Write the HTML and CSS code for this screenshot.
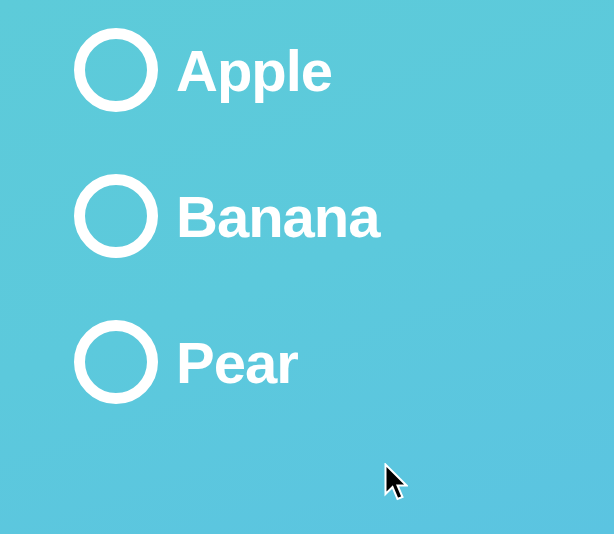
FILE: index.html
```html
<!DOCTYPE html>
<html>
<head>
<meta charset="utf-8">
<link rel="stylesheet" href="styles.css">
</head>
<body>
<div class="page">
  <ul class="options">
    <li class="option"><span class="radio"></span><span class="label">Apple</span></li>
    <li class="option"><span class="radio"></span><span class="label">Banana</span></li>
    <li class="option"><span class="radio"></span><span class="label">Pear</span></li>
  </ul>
  <svg class="cursor" width="24" height="40" viewBox="0 0 24 40" xmlns="http://www.w3.org/2000/svg">
    <path d="M1.5 1.5 L1.5 31 L8.5 24 L13.5 36 L18.5 34 L13.5 22.5 L22.5 22.5 Z" fill="#000" stroke="#fff" stroke-width="2" stroke-linejoin="miter"/>
  </svg>
</div>
</body>
</html>
```

FILE: styles.css
```css
html, body {
  margin: 0;
  padding: 0;
  height: 100%;
}
body {
  background: linear-gradient(160deg, #5dcbd9 0%, #5cc9dc 50%, #5bc4e1 100%);
  font-family: "Liberation Sans", Arial, Helvetica, sans-serif;
  overflow: hidden;
}
.page {
  position: relative;
  width: 614px;
  height: 534px;
}
.options {
  list-style: none;
  margin: 0;
  padding: 28px 0 0 74px;
  display: flex;
  flex-direction: column;
  gap: 62px;
}
.option {
  display: flex;
  align-items: center;
  gap: 18px;
  height: 84px;
}
.radio {
  box-sizing: border-box;
  width: 84px;
  height: 84px;
  border: 11px solid #fff;
  border-radius: 50%;
  flex: none;
}
.label {
  color: #fff;
  font-weight: bold;
  font-size: 58px;
  letter-spacing: -1px;
  line-height: 1;
  position: relative;
  top: 1px;
}
.cursor {
  position: absolute;
  left: 384px;
  top: 463px;
}
```
